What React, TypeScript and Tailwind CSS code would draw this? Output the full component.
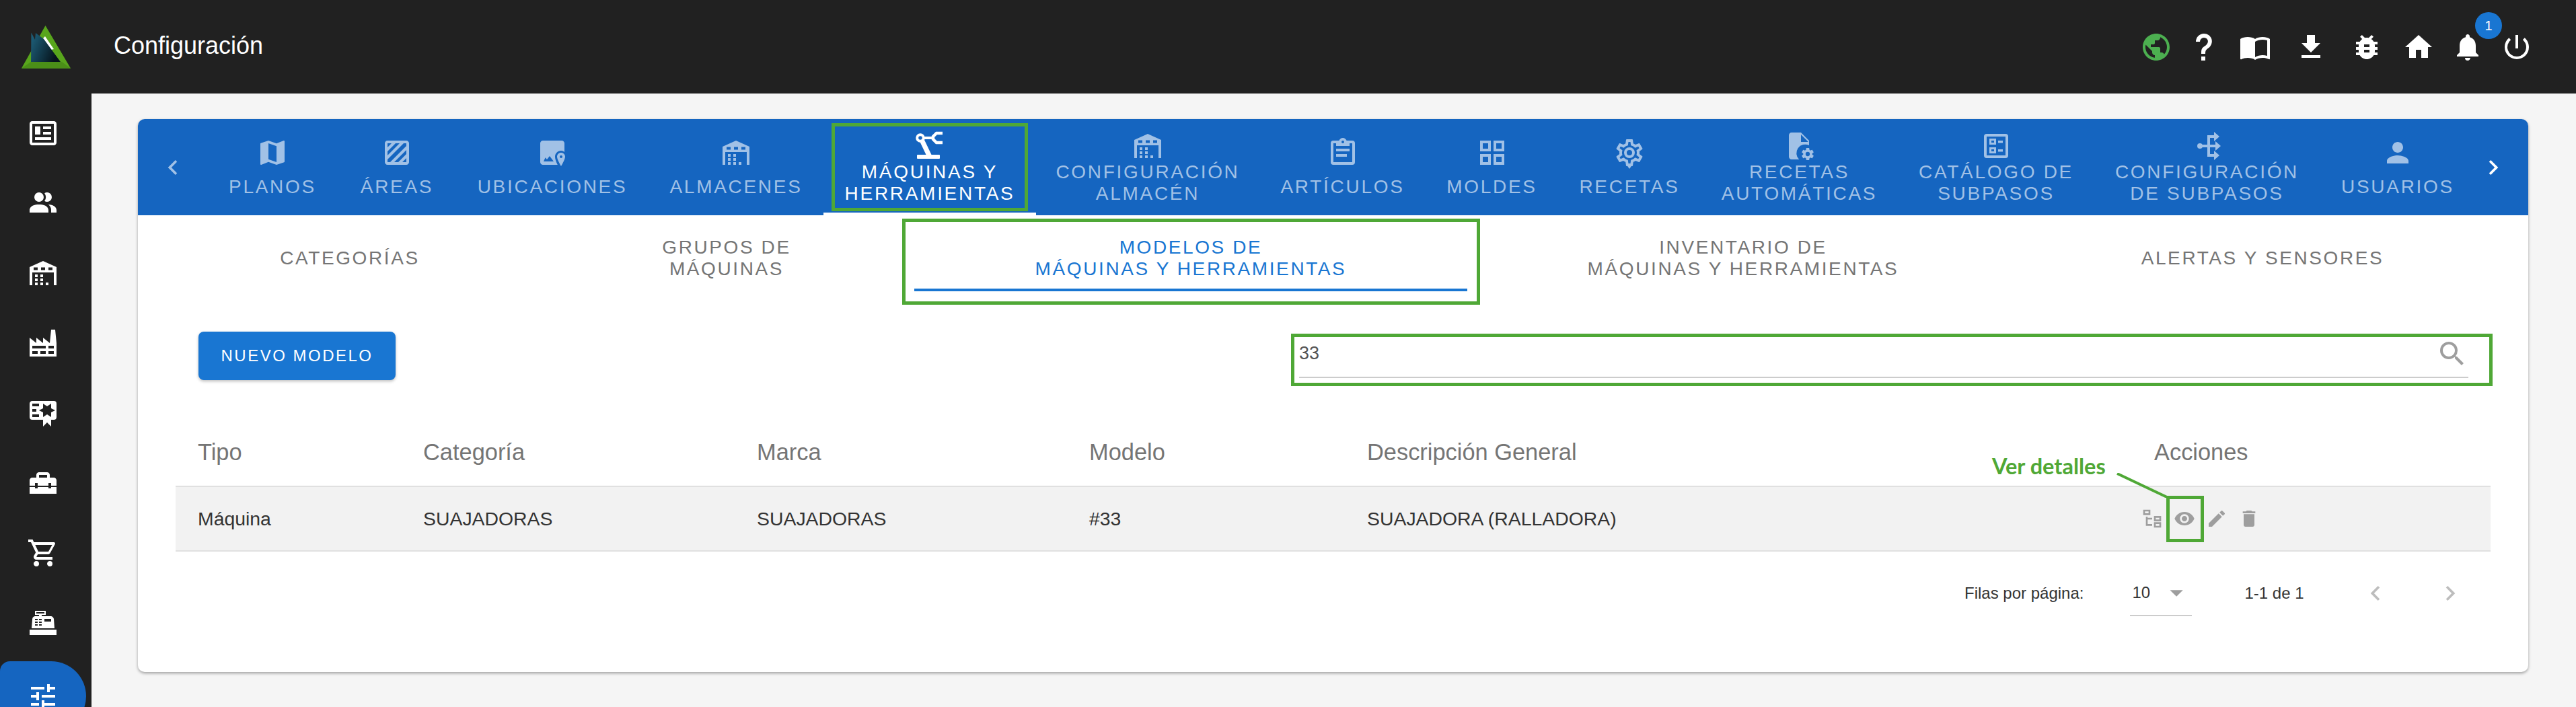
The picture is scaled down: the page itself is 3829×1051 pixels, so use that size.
import type { ReactNode } from "react";
import {
  MdArrowDropDown,
  MdBugReport,
  MdChevronLeft,
  MdChevronRight,
  MdDelete,
  MdEdit,
  MdFileDownload,
  MdHome,
  MdNotifications,
  MdPerson,
  MdPowerSettingsNew,
  MdPublic,
  MdSearch,
  MdTune,
  MdVisibility,
} from "react-icons/md";

const COG =
  "M12,15.5A3.5,3.5 0 0,1 8.5,12A3.5,3.5 0 0,1 12,8.5A3.5,3.5 0 0,1 15.5,12A3.5,3.5 0 0,1 12,15.5M19.43,12.97C19.47,12.65 19.5,12.33 19.5,12C19.5,11.67 19.47,11.34 19.43,11L21.54,9.37C21.73,9.22 21.78,8.95 21.66,8.73L19.66,5.27C19.54,5.05 19.27,4.96 19.05,5.05L16.56,6.05C16.04,5.66 15.5,5.32 14.87,5.07L14.5,2.42C14.46,2.18 14.25,2 14,2H10C9.75,2 9.54,2.18 9.5,2.42L9.13,5.07C8.5,5.32 7.96,5.66 7.44,6.05L4.95,5.05C4.73,4.96 4.46,5.05 4.34,5.27L2.34,8.73C2.21,8.95 2.27,9.22 2.46,9.37L4.57,11C4.53,11.34 4.5,11.67 4.5,12C4.5,12.33 4.53,12.65 4.57,12.97L2.46,14.63C2.27,14.78 2.21,15.05 2.34,15.27L4.34,18.73C4.46,18.95 4.73,19.03 4.95,18.95L7.44,17.94C7.96,18.34 8.5,18.68 9.13,18.93L9.5,21.58C9.54,21.82 9.75,22 10,22H14C14.25,22 14.46,21.82 14.5,21.58L14.87,18.93C15.5,18.67 16.04,18.34 16.56,17.94L19.05,18.95C19.27,19.03 19.54,18.95 19.66,18.73L21.66,15.27C21.78,15.05 21.73,14.78 21.54,14.63L19.43,12.97Z";

function Icon({ d, className = "w-12 h-12", children }: { d?: string; className?: string; children?: ReactNode }) {
  return (
    <svg viewBox="0 0 24 24" fill="currentColor" fillRule="evenodd" className={className}>
      {d && <path d={d} />}
      {children}
    </svg>
  );
}

const warehouse =
  "M2 21V7.5L12 3L22 7.5V21H20V11.5H4V21Z M5 7.8H8V9.8H5Z M10.5 7.8H13.5V9.8H10.5Z M16 7.8H19V9.8H16Z M6 13H8V15H6Z M10 13H12V15H10Z M6 16H8V18H6Z M10 16H12V18H10Z M6 19H8V21H6Z M10 19H12V21H10Z M14 19H16V21H14Z";

const sideIcons = [
  "M20 5L20 19L4 19L4 5H20M20 3H4C2.89 3 2 3.89 2 5V19C2 20.11 2.89 21 4 21H20C21.11 21 22 20.11 22 19V5C22 3.89 21.11 3 20 3M18 15H6V17H18V15M10 7H6V13H10V7M12 9H18V7H12V9M18 11H12V13H18V11Z",
  "M16 17V19H2V17S2 13 9 13 16 17 16 17M12.5 7.5A3.5 3.5 0 1 0 9 11A3.5 3.5 0 0 0 12.5 7.5M15.94 13A5.32 5.32 0 0 1 18 17V19H22V17S22 13.37 15.94 13M15 4A3.39 3.39 0 0 0 13.07 4.59A5 5 0 0 1 13.07 10.41A3.39 3.39 0 0 0 15 11A3.5 3.5 0 0 0 15 4Z",
  warehouse,
  "M4,18V20H8V18H4M4,14V16H14V14H4M10,18V20H14V18H10M16,14V16H20V14H16M16,18V20H20V18H16M2,22V8L7,12V8L12,12V8L17,12L18,2H21L22,12V22H2Z",
  "M4,3C2.89,3 2,3.89 2,5V15A2,2 0 0,0 4,17H12V22L15,19L18,22V17H20A2,2 0 0,0 22,15V8L22,6V5A2,2 0 0,0 20,3H16V3H4M12,5L15,7L18,5V8.5L21,10L18,11.5V15L15,13L12,15V11.5L9,10L12,8.5V5M4,5H9V7H4V5M4,9H7V11H4V9M4,13H9V15H4V13Z",
  "M18 16H16V15H8V16H6V15H2V20H22V15H18V16M20 8H17V6C17 4.9 16.1 4 15 4H9C7.9 4 7 4.9 7 6V8H4C2.9 8 2 8.9 2 10V14H6V12H8V14H16V12H18V14H22V10C22 8.9 21.1 8 20 8M15 8H9V6H15V8Z",
  "M17,18A2,2 0 0,1 19,20A2,2 0 0,1 17,22C15.89,22 15,21.1 15,20C15,18.89 15.89,18 17,18M1,2H4.27L5.21,4H20A1,1 0 0,1 21,5C21,5.17 20.95,5.34 20.88,5.5L17.3,11.97C16.96,12.58 16.3,13 15.55,13H8.1L7.2,14.63L7.17,14.75A0.25,0.25 0 0,0 7.42,15H19V17H7C5.89,17 5,16.1 5,15C5,14.65 5.09,14.32 5.24,14.04L6.6,11.59L3,4H1V2M7,18A2,2 0 0,1 9,20A2,2 0 0,1 7,22C5.89,22 5,21.1 5,20C5,18.89 5.89,18 7,18M16,11L18.78,6H6.14L8.5,11H16Z",
  "M2,17H22V21H2V17M6.25,7H9V6H6V3H14V6H11V7H17.8C18.8,7 19.8,8 20,9L20.5,16H3.5L4.05,9C4.05,8 5.05,7 6.25,7M13,9V11H18V9H13M6,9V10H8V9H6M9,9V10H11V9H9M6,11V12H8V11H6M9,11V12H11V11H9M6,13V14H8V13H6M9,13V14H11V13H9M7,4V5H13V4H7Z",
];

const tabs: { label: string; width: string; icon: ReactNode; active?: boolean }[] = [
  {
    label: "PLANOS",
    width: "w-[194px]",
    icon: <Icon d="M15,19L9,16.89V5L15,7.11M20.5,3C20.44,3 20.39,3 20.34,3L15,5.1L9,3L3.36,4.9C3.15,4.97 3,5.15 3,5.38V20.5A0.5,0.5 0 0,0 3.5,21C3.55,21 3.61,21 3.66,20.97L9,18.9L15,21L20.64,19.1C20.85,19 21,18.85 21,18.62V3.5A0.5,0.5 0 0,0 20.5,3Z" />,
  },
  {
    label: "ÁREAS",
    width: "w-[176px]",
    icon: <Icon d="M5 3H19C20.1 3 21 3.9 21 5V19C21 20.1 20.1 21 19 21H5C3.9 21 3 20.1 3 19V5C3 3.9 3.9 3 5 3M5 5V8L8 5H5M11 5L5 11V14L14 5H11M17 5L5 17V19H7L19 7V5H17M19 10L10 19H13L19 13V10M19 16L16 19H19V16Z" />,
  },
  {
    label: "UBICACIONES",
    width: "w-[286px]",
    icon: (
      <Icon d="M5 3H19C20.1 3 21 3.9 21 5V11.5C20.3 10.9 19.4 10.5 18.5 10.5C16 10.5 14 12.5 14 15C14 16.5 14.7 18.5 15.9 21H5C3.9 21 3 20.1 3 19V5C3 3.9 3.9 3 5 3Z M5.5 18.5H13L10 14.5L8 17L6.8 15.6Z M18.5 12C16.8 12 15.5 13.3 15.5 15C15.5 17 18.5 22 18.5 22S21.5 17 21.5 15C21.5 13.3 20.2 12 18.5 12ZM18.5 14A1 1 0 1 1 18.5 16A1 1 0 0 1 18.5 14Z" />
    ),
  },
  { label: "ALMACENES", width: "w-[260px]", icon: <Icon d={warehouse} /> },
  {
    label: "MÁQUINAS Y\nHERRAMIENTAS",
    width: "w-[316px]",
    active: true,
    icon: (
      <Icon>
        <circle cx="5" cy="6" r="2.4" fill="none" stroke="currentColor" strokeWidth="2" />
        <path d="M7.5 6H14" fill="none" stroke="currentColor" strokeWidth="2" />
        <path d="M21.5 2.5H17L14.5 5V7L17 9.5H21.5" fill="none" stroke="currentColor" strokeWidth="2.2" />
        <path d="M4.5 8.5L8 7.5L13.5 19H9.5Z" />
        <rect x="2.5" y="18.5" width="17" height="3" rx="0.5" />
      </Icon>
    ),
  },
  { label: "CONFIGURACIÓN\nALMACÉN", width: "w-[332px]", icon: <Icon d={warehouse} /> },
  {
    label: "ARTÍCULOS",
    width: "w-[247px]",
    icon: <Icon d="M19,3H14.82C14.4,1.84 13.3,1 12,1C10.7,1 9.6,1.84 9.18,3H5A2,2 0 0,0 3,5V19A2,2 0 0,0 5,21H19A2,2 0 0,0 21,19V5A2,2 0 0,0 19,3M12,3A1,1 0 0,1 13,4A1,1 0 0,1 12,5A1,1 0 0,1 11,4A1,1 0 0,1 12,3M7,7H17V5H19V19H5V5H7V7M17,11H7V9H17V11M15,15H7V13H15V15Z" />,
  },
  {
    label: "MOLDES",
    width: "w-[197px]",
    icon: <Icon d="M3 11H11V3H3M5 5H9V9H5M13 21H21V13H13M15 15H19V19H15M3 21H11V13H3M5 15H9V19H5M13 3V11H21V3M19 9H15V5H19Z" />,
  },
  {
    label: "RECETAS",
    width: "w-[212px]",
    icon: (
      <Icon d="M12,8A4,4 0 0,1 16,12A4,4 0 0,1 12,16A4,4 0 0,1 8,12A4,4 0 0,1 12,8M12,10A2,2 0 0,0 10,12A2,2 0 0,0 12,14A2,2 0 0,0 14,12A2,2 0 0,0 12,10M10,22C9.75,22 9.54,21.82 9.5,21.58L9.13,18.93C8.5,18.68 7.96,18.34 7.44,17.94L4.95,18.95C4.73,19.03 4.46,18.95 4.34,18.73L2.34,15.27C2.21,15.05 2.27,14.78 2.46,14.63L4.57,12.97L4.5,12L4.57,11L2.46,9.37C2.27,9.22 2.21,8.95 2.34,8.73L4.34,5.27C4.46,5.05 4.73,4.96 4.95,5.05L7.44,6.05C7.96,5.66 8.5,5.32 9.13,5.07L9.5,2.42C9.54,2.18 9.75,2 10,2H14C14.25,2 14.46,2.18 14.5,2.42L14.87,5.07C15.5,5.32 16.04,5.66 16.56,6.05L19.05,5.05C19.27,4.96 19.54,5.05 19.66,5.27L21.66,8.73C21.79,8.95 21.73,9.22 21.54,9.37L19.43,11L19.5,12L19.43,13L21.54,14.63C21.73,14.78 21.79,15.05 21.66,15.27L19.66,18.73C19.54,18.95 19.27,19.04 19.05,18.95L16.56,17.95C16.04,18.34 15.5,18.68 14.87,18.93L14.5,21.58C14.46,21.82 14.25,22 14,22H10M11.25,4L10.88,6.61C9.68,6.86 8.62,7.5 7.85,8.39L5.44,7.35L4.69,8.65L6.8,10.2C6.4,11.37 6.4,12.64 6.8,13.8L4.68,15.36L5.43,16.66L7.86,15.62C8.63,16.5 9.68,17.14 10.87,17.38L11.24,20H12.76L13.13,17.39C14.32,17.14 15.37,16.5 16.14,15.62L18.57,16.66L19.32,15.36L17.2,13.81C17.6,12.64 17.6,11.37 17.2,10.2L19.31,8.65L18.56,7.35L16.15,8.39C15.38,7.5 14.32,6.86 13.12,6.62L12.75,4H11.25Z">
        <path d="M12 24L9.5 20.5H14.5Z" />
      </Icon>
    ),
  },
  {
    label: "RECETAS\nAUTOMÁTICAS",
    width: "w-[293px]",
    icon: (
      <Icon d="M6 2H13L19 8V11.5A6.5 6.5 0 0 0 11.6 22H6C4.9 22 4 21.1 4 20V4C4 2.9 4.9 2 6 2Z M13 3.5V9H18.5Z">
        <path d={COG} transform="translate(12.6 12.6) scale(0.45)" />
      </Icon>
    ),
  },
  {
    label: "CATÁLOGO DE\nSUBPASOS",
    width: "w-[292px]",
    icon: (
      <Icon d="M5 3H19A2 2 0 0 1 21 5V19A2 2 0 0 1 19 21H5A2 2 0 0 1 3 19V5A2 2 0 0 1 5 3Z M5 5V19H19V5Z">
        <path d="M7 6.5H12V11H7Z M8.5 8V9.5H10.5V8Z M13.5 8H17V9.8H13.5Z M7 13H12V17.5H7Z M8.5 14.5V16H10.5V14.5Z M13.5 14.5H17V16.3H13.5Z" />
      </Icon>
    ),
  },
  {
    label: "CONFIGURACIÓN\nDE SUBPASOS",
    width: "w-[335px]",
    icon: (
      <Icon>
        <path d="M18 5H13V19H18" fill="none" stroke="currentColor" strokeWidth="2" />
        <path d="M6 12H19" fill="none" stroke="currentColor" strokeWidth="2" />
        <circle cx="6.5" cy="12" r="2" />
        <path d="M17 1.5L21 5L17 8.5Z M18 8.5L22 12L18 15.5Z M17 15.5L21 19L17 22.5Z" />
      </Icon>
    ),
  },
  { label: "USUARIOS", width: "w-[232px]", icon: <MdPerson className="w-12 h-12" /> },
];

const subTabs: { label: string; width: string; active?: boolean }[] = [
  { label: "CATEGORÍAS", width: "w-[562px]" },
  { label: "GRUPOS DE\nMÁQUINAS", width: "w-[558px]" },
  { label: "MODELOS DE\nMÁQUINAS Y HERRAMIENTAS", width: "w-[822px]", active: true },
  { label: "INVENTARIO DE\nMÁQUINAS Y HERRAMIENTAS", width: "w-[820px]" },
  { label: "ALERTAS Y SENSORES", width: "w-[724px]" },
];

const tableCols = "grid grid-cols-[335px_496px_494px_413px_1170px_533px]";
const headers = ["Tipo", "Categoría", "Marca", "Modelo", "Descripción General", "Acciones"];
const row = ["Máquina", "SUAJADORAS", "SUAJADORAS", "#33", "SUAJADORA (RALLADORA)"];

function Logo() {
  return (
    <svg viewBox="0 0 73 64" className="w-[73px] h-[64px]">
      <defs>
        <linearGradient id="logoDark" x1="0" x2="1" y1="0" y2="0.4">
          <stop offset="0" stopColor="#1f6480" />
          <stop offset="1" stopColor="#06141c" />
        </linearGradient>
      </defs>
      <path d="M35.5 0L73 63.5H0Z" fill="#58a51c" />
      <path d="M0 63.5L14 54L60 54L73 63.5Z" fill="#4b8f18" />
      <path d="M35 16L48 35L44 36L32 19Z" fill="#ffffff" />
      <path d="M14.5 10.5L20 21L21 11L33 20L58 54H14Z" fill="url(#logoDark)" />
    </svg>
  );
}

export default function App() {
  return (
    <div className="w-[3829px] h-[1051px] overflow-hidden flex flex-col bg-[#212121] font-['Liberation_Sans',Arial,sans-serif]">
      <header className="h-[139px] shrink-0 flex items-center text-white">
        <div className="ml-[32px] w-[137px]">
          <Logo />
        </div>
        <span className="text-[36px] leading-none -mt-[3px]">Configuración</span>
        <div className="ml-auto mr-[51px] flex items-center">
          <div className="w-[71px] flex justify-center text-[#4caf50]">
            <MdPublic className="w-12 h-12" />
          </div>
          <div className="w-[72px] flex justify-center">
            <Icon d="M10,19H13V22H10V19M12,2C17.35,2.22 19.68,7.62 16.5,11.67C15.67,12.67 14.33,13.33 13.67,14.17C13,15 13,16 13,17H10C10,15.33 10,13.92 10.67,12.92C11.33,11.92 12.67,11.33 13.5,10.67C15.92,8.43 15.32,5.26 12,5A3,3 0 0,0 9,8H6A6,6 0 0,1 12,2Z" />
          </div>
          <div className="w-[80px] flex justify-center">
            <Icon d="M21,5C19.89,4.65 18.67,4.5 17.5,4.5C15.55,4.5 13.45,4.9 12,6C10.55,4.9 8.45,4.5 6.5,4.5C4.55,4.5 2.45,4.9 1,6V20.65C1,20.9 1.25,21.15 1.5,21.15C1.6,21.15 1.65,21.1 1.75,21.1C3.1,20.45 5.05,20 6.5,20C8.45,20 10.55,20.4 12,21.5C13.35,20.65 15.8,20 17.5,20C19.15,20 20.85,20.3 22.25,21.05C22.35,21.1 22.4,21.1 22.5,21.1C22.75,21.1 23,20.85 23,20.6V6C22.4,5.55 21.75,5.25 21,5M21,18.5C19.9,18.15 18.7,18 17.5,18C15.8,18 13.35,18.65 12,19.5V8C13.35,7.15 15.8,6.5 17.5,6.5C18.7,6.5 19.9,6.65 21,7V18.5Z" />
          </div>
          <div className="w-[86px] flex justify-center">
            <MdFileDownload className="w-12 h-12" />
          </div>
          <div className="w-[80px] flex justify-center">
            <MdBugReport className="w-12 h-12" />
          </div>
          <div className="w-[73px] flex justify-center">
            <MdHome className="w-12 h-12" />
          </div>
          <div className="relative w-[73px] flex justify-center">
            <MdNotifications className="w-12 h-12" />
            <span className="absolute left-[48px] -top-[28px] w-10 h-10 rounded-full bg-[#1976d2] flex items-center justify-center text-[20px]">
              1
            </span>
          </div>
          <div className="w-[74px] flex justify-center">
            <MdPowerSettingsNew className="w-12 h-12" />
          </div>
        </div>
      </header>

      <div className="flex flex-1 min-h-0">
        <nav className="w-[136px] shrink-0 pt-[7px] text-white">
          {sideIcons.map((d) => (
            <div key={d} className="h-[104px] flex items-center justify-center pr-[8px]">
              <Icon d={d} />
            </div>
          ))}
          <div className="h-[104px] w-[128px] mt-[5px] rounded-tr-[56px] rounded-br-[56px] rounded-tl-[16px] bg-[#1565c0] flex items-center justify-center">
            <MdTune className="w-12 h-12" />
          </div>
        </nav>

        <main className="flex-1 bg-[#f5f5f5] pl-[69px] pr-[71px] pt-[38px]">
          <section className="h-[822px] rounded-[10px] bg-white shadow-[0_2px_4px_rgba(0,0,0,0.35)]">
            <div className="h-[143px] rounded-t-[10px] bg-[#1565c0] flex text-[28px] leading-[32px] tracking-[2.7px]">
              <div className="w-[103px] flex items-center justify-center text-[#a1c1e6]">
                <MdChevronLeft className="w-[44px] h-[44px]" />
              </div>
              {tabs.map((tab) => {
                const twoLines = tab.label.includes("\n");
                return (
                  <div
                    key={tab.label}
                    className={`${tab.width} relative flex flex-col items-center justify-center text-center whitespace-pre-line ${
                      tab.active ? "text-white" : "text-[#a1c1e6]"
                    }`}
                  >
                    {tab.icon}
                    <span className={twoLines ? "-mt-px" : "mt-[11px]"}>{tab.label}</span>
                    {tab.active && (
                      <>
                        <span className="absolute inset-x-0 bottom-0 h-1 bg-white" />
                        <span className="absolute left-[12px] right-[12px] top-[6px] bottom-[6px] border-[5px] border-[#4fa836]" />
                      </>
                    )}
                  </div>
                );
              })}
              <div className="w-[78px] pr-[26px] flex items-center justify-center text-white">
                <MdChevronRight className="w-[44px] h-[44px]" />
              </div>
            </div>

            <div className="mt-[15px] pl-[34px] flex h-[98px] text-[28px] leading-[32px] tracking-[2.6px]">
              {subTabs.map((tab) => (
                <div
                  key={tab.label}
                  className={`${tab.width} relative flex items-center justify-center text-center whitespace-pre-line ${
                    tab.active ? "text-[#1976d2]" : "text-[#757575]"
                  }`}
                >
                  {tab.label}
                  {tab.active && (
                    <>
                      <span className="absolute inset-x-0 bottom-0 h-1 bg-[#1976d2]" />
                      <span className="absolute -left-[18px] -right-[19px] -top-[10px] -bottom-[20px] border-[5px] border-[#4fa836]" />
                    </>
                  )}
                </div>
              ))}
            </div>

            <div className="mt-[60px] pl-[90px] pr-[53px] flex justify-between items-start">
              <button className="w-[293px] h-[72px] rounded-[8px] bg-[#1976d2] text-white text-[24px] tracking-[2.5px] shadow-[0_2px_4px_rgba(0,0,0,0.25)]">
                NUEVO MODELO
              </button>
              <div className="mt-[3px] w-[1786px] h-[78px] border-[5px] border-[#4fa836] pl-[7px] pr-[31px]">
                <div className="h-[61px] pb-[10px] border-b-2 border-[#cccccc] flex items-center justify-between text-[27px] text-[#555555]">
                  <span>33</span>
                  <MdSearch className="w-12 h-12 text-[#9e9e9e]" />
                </div>
              </div>
            </div>

            <div className="relative mt-[50px] mx-[56px]">
              <div className={`${tableCols} h-[98px] items-center text-[34.4px] text-[#757575]`}>
                {headers.map((h) => (
                  <div key={h} className="pl-[33px]">
                    {h}
                  </div>
                ))}
              </div>
              <div className={`${tableCols} h-[98px] items-center bg-[#f2f2f2] border-y-2 border-[#e0e0e0] text-[28.4px] text-[#333333]`}>
                {row.map((c, i) => (
                  <div key={i} className="pl-[33px]">
                    {c}
                  </div>
                ))}
                <div className="pl-[6px] flex items-center text-[#9e9e9e]">
                  <div className="w-12 flex justify-center">
                    <Icon className="w-8 h-8" d="M12 13H7V18H12V20H5V10H7V11H12V13M8 4V6H4V4H8M10 2H2V8H10V2M20 11V13H16V11H20M22 9H14V15H22V9M20 18V20H16V18H20M22 16H14V22H22V16Z" />
                  </div>
                  <div className="relative w-12 h-12 flex items-center justify-center">
                    <MdVisibility className="w-8 h-8" />
                    <span className="absolute -left-[3px] w-[56px] -top-[10px] h-[69px] border-[5px] border-[#4fa836]" />
                  </div>
                  <div className="w-12 flex justify-center">
                    <MdEdit className="w-8 h-8" />
                  </div>
                  <div className="w-12 flex justify-center">
                    <MdDelete className="w-8 h-8" />
                  </div>
                </div>
              </div>

              <span className="absolute left-[2700px] top-[50px] text-[32.5px] leading-[38px] font-bold text-[#4fa836] font-['Lato',sans-serif]">
                Ver detalles
              </span>
              <svg className="absolute left-[2885px] top-[79px] w-[76px] h-[37px]" viewBox="0 0 76 37">
                <path d="M1 1L75 36" stroke="#4fa836" strokeWidth="4" fill="none" />
              </svg>
            </div>

            <div className="mt-[28px] pl-[2715px] flex items-center h-[68px] text-[24px] text-[#333333]">
              <span>Filas por página:</span>
              <div className="ml-[69px] w-[92px] h-[68px] border-b-2 border-[#cccccc] flex items-center pl-[3px]">
                <span>10</span>
                <MdArrowDropDown className="ml-[16px] w-12 h-12 text-[#9e9e9e]" />
              </div>
              <span className="ml-[78px]">1-1 de 1</span>
              <MdChevronLeft className="ml-[84px] w-[44px] h-[44px] text-[#bdbdbd]" />
              <MdChevronRight className="ml-[67px] w-[44px] h-[44px] text-[#bdbdbd]" />
            </div>
          </section>
        </main>
      </div>
    </div>
  );
}
